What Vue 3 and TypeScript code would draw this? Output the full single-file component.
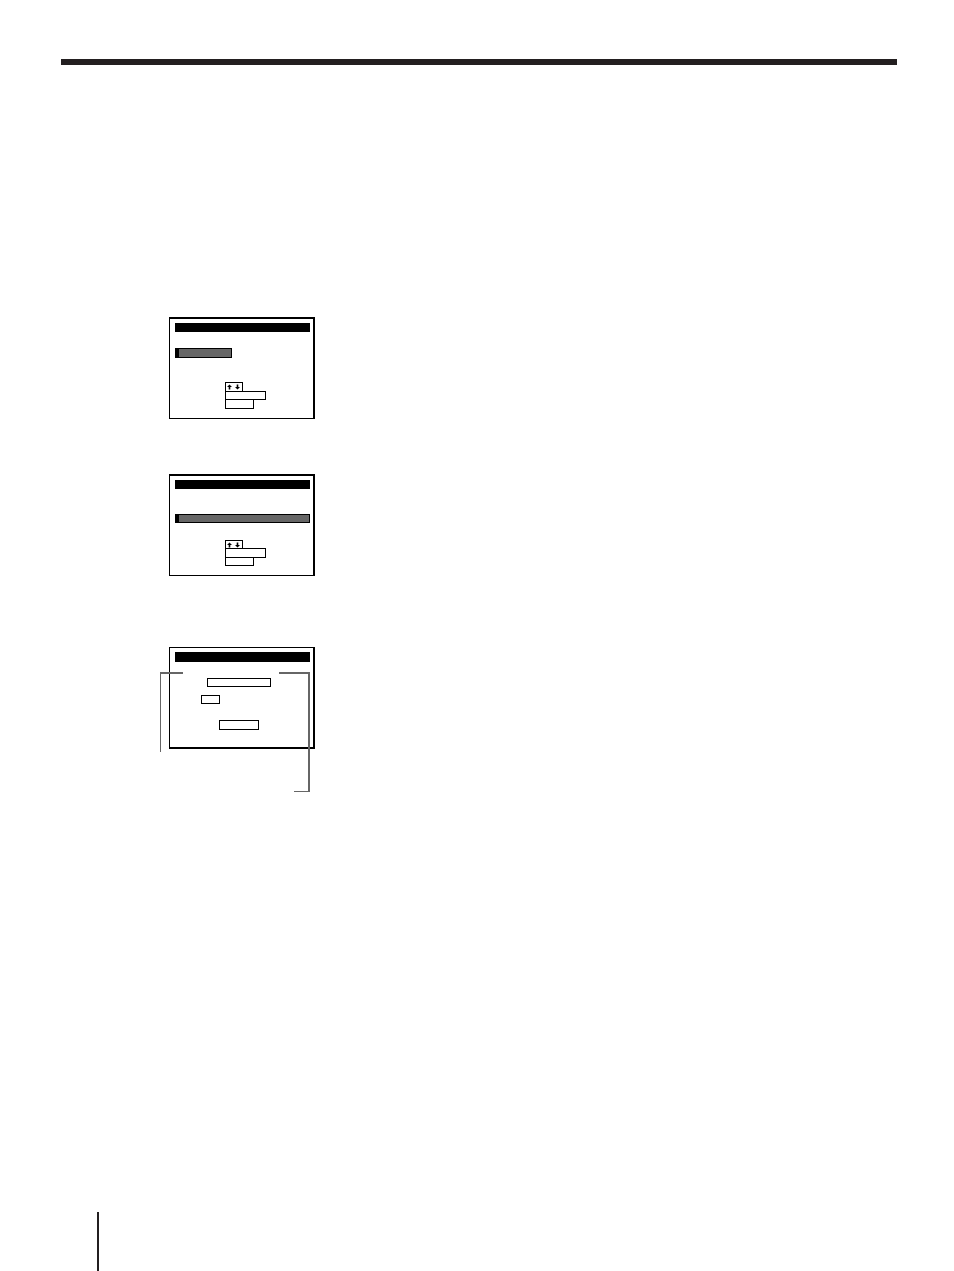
<script setup lang="ts">
interface Screen {
  id: string
  highlight: 'short' | 'full'
}

const screens: Screen[] = [
  { id: 'first', highlight: 'short' },
  { id: 'second', highlight: 'full' },
]
</script>

<template>
  <main class="page">
    <header class="rule"></header>

    <section class="figures">
      <figure v-for="s in screens" :key="s.id" class="screen" :class="s.id">
        <div class="title"></div>
        <div class="highlight" :class="s.highlight"></div>
        <div class="keys">
          <div class="key arrows">
            <svg width="16" height="6" viewBox="0 0 16 6" aria-hidden="true">
              <path d="M3.5 0.4 L6 3 H4.3 V5.4 H2.7 V3 H1 Z" />
              <path d="M11.5 5.6 L14 3 H12.3 V0.6 H10.7 V3 H9 Z" />
            </svg>
          </div>
          <div class="key wide"></div>
          <div class="key narrow"></div>
        </div>
      </figure>

      <figure class="screen third">
        <div class="title"></div>
        <div class="field name"></div>
        <div class="field code"></div>
        <div class="field action"></div>
        <div class="callout left"></div>
        <div class="callout right"></div>
        <div class="callout foot"></div>
      </figure>
    </section>

    <footer class="footer">
      <div class="marker"></div>
    </footer>
  </main>
</template>

<style>
body {
  margin: 0;
  background: #fff;
}
</style>

<style scoped>
.page {
  box-sizing: border-box;
  display: flex;
  flex-direction: column;
  min-height: 100vh;
  padding: 59px 57px 0 61px;
  background: #fff;
  font-family: "Liberation Sans", Arial, sans-serif;
}

.page * {
  box-sizing: border-box;
}

.rule {
  height: 6px;
  background: #231f20;
}

.figures {
  display: flex;
  flex-direction: column;
  align-items: flex-start;
  padding: 252px 0 0 108px;
}

.screen {
  position: relative;
  width: 146px;
  margin: 0;
  padding: 4px 3px 9px 5px;
  border: solid #000;
  border-width: 2px 2px 1px 1px;
}

.second {
  margin-top: 55px;
}

.third {
  margin-top: 71px;
  padding-bottom: 17px;
  border-width: 1px 2px 2px 1px;
}

.title {
  height: 9px;
  background: #000;
}

.third .title {
  height: 10px;
}

.highlight {
  border: 1px solid #000;
  border-left-width: 4px;
  background: #666;
}

.highlight.short {
  width: 57px;
  height: 10px;
  margin-top: 16px;
}

.highlight.full {
  height: 9px;
  margin-top: 25px;
}

.keys {
  display: flex;
  flex-direction: column;
  align-items: flex-start;
  margin: 24px 0 0 50px;
}

.second .keys {
  margin-top: 17px;
}

.key {
  height: 10px;
  border: 1px solid #000;
}

.key + .key {
  margin-top: -1px;
}

.arrows {
  display: flex;
  align-items: center;
  width: 18px;
}

.arrows svg {
  display: block;
  fill: #000;
}

.wide {
  width: 41px;
}

.narrow {
  width: 29px;
}

.first .wide,
.second .arrows {
  height: 9px;
}

.second .narrow {
  height: 9px;
}

.field {
  height: 9px;
  border: 1px solid #000;
}

.name {
  width: 64px;
  margin: 16px 0 0 32px;
}

.code {
  width: 19px;
  margin: 8px 0 0 26px;
}

.action {
  width: 40px;
  height: 10px;
  margin: 16px 0 0 44px;
}

/* Leader lines drawn over the screen outline */
.callout {
  position: absolute;
  border: 0 solid #666;
}

.callout.left {
  top: 24px;
  left: -10px;
  width: 23px;
  height: 80px;
  border-top-width: 2px;
  border-left-width: 1px;
}

.callout.right {
  top: 24px;
  right: 3px;
  width: 31px;
  height: 120px;
  border-top-width: 2px;
  border-right-width: 2px;
}

.callout.foot {
  top: 143px;
  right: 3px;
  width: 16px;
  border-bottom-width: 1px;
}

.footer {
  margin-top: auto;
  padding-left: 36px;
}

.marker {
  width: 2px;
  height: 59px;
  background: #231f20;
}
</style>
